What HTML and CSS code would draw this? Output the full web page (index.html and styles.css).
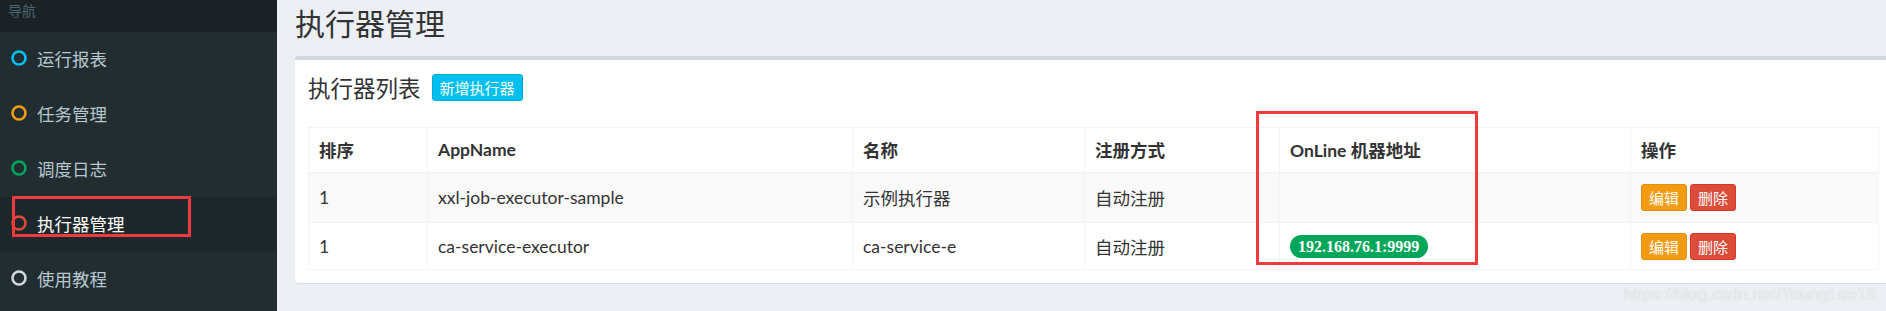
FILE: index.html
```html
<!DOCTYPE html>
<html lang="zh-CN">
<head>
    <meta charset="UTF-8">
    <title>执行器管理</title>
    <link rel="stylesheet" href="styles.css">
</head>
<body>
    <div class="wrapper">
        <aside class="sidebar">
            <div class="sidebar-header">导航</div>
            <ul class="sidebar-menu">
                <li>
                    <svg class="dot" width="16" height="16" viewBox="0 0 16 16"><circle cx="8" cy="8" r="6.5" stroke="#00c0ef"/></svg>
                    <span>运行报表</span>
                </li>
                <li>
                    <svg class="dot" width="16" height="16" viewBox="0 0 16 16"><circle cx="8" cy="8" r="6.5" stroke="#f39c12"/></svg>
                    <span>任务管理</span>
                </li>
                <li>
                    <svg class="dot" width="16" height="16" viewBox="0 0 16 16"><circle cx="8" cy="8" r="6.5" stroke="#00a65a"/></svg>
                    <span>调度日志</span>
                </li>
                <li class="active">
                    <svg class="dot" width="16" height="16" viewBox="0 0 16 16"><circle cx="8" cy="8" r="6.5" stroke="#dd4b39"/></svg>
                    <span>执行器管理</span>
                </li>
                <li>
                    <svg class="dot" width="16" height="16" viewBox="0 0 16 16"><circle cx="8" cy="8" r="6.5" stroke="#d2d6de"/></svg>
                    <span>使用教程</span>
                </li>
            </ul>
        </aside>
        <main class="content">
            <h1 class="page-title">执行器管理</h1>
            <section class="box">
                <div class="box-header">
                    <h3 class="box-title">执行器列表</h3>
                    <button class="btn btn-info">新增执行器</button>
                </div>
                <div class="box-body">
                    <table class="table">
                        <colgroup>
                            <col style="width: 119px">
                            <col style="width: 425px">
                            <col style="width: 232px">
                            <col style="width: 195px">
                            <col style="width: 351px">
                            <col style="width: 248px">
                        </colgroup>
                        <thead>
                            <tr>
                                <th>排序</th>
                                <th>AppName</th>
                                <th>名称</th>
                                <th>注册方式</th>
                                <th>OnLine 机器地址</th>
                                <th>操作</th>
                            </tr>
                        </thead>
                        <tbody>
                            <tr class="row-odd">
                                <td>1</td>
                                <td>xxl-job-executor-sample</td>
                                <td>示例执行器</td>
                                <td>自动注册</td>
                                <td></td>
                                <td>
                                    <div class="actions">
                                        <button class="btn btn-xs btn-warning">编辑</button>
                                        <button class="btn btn-xs btn-danger">删除</button>
                                    </div>
                                </td>
                            </tr>
                            <tr class="row-even">
                                <td>1</td>
                                <td>ca-service-executor</td>
                                <td>ca-service-e</td>
                                <td>自动注册</td>
                                <td><span class="label label-success">192.168.76.1:9999</span></td>
                                <td>
                                    <div class="actions">
                                        <button class="btn btn-xs btn-warning">编辑</button>
                                        <button class="btn btn-xs btn-danger">删除</button>
                                    </div>
                                </td>
                            </tr>
                        </tbody>
                    </table>
                </div>
            </section>
        </main>

        <!-- annotation frames drawn over the screenshot -->
        <div class="mark mark-menu"></div>
        <div class="mark mark-online"></div>
        <div class="watermark">https://blog.csdn.net/YoungLee16</div>
    </div>
</body>
</html>
```

FILE: styles.css
```css
* {
    box-sizing: border-box;
}
html, body {
    margin: 0;
    padding: 0;
}
body {
    font-family: "Noto Sans CJK SC", "Noto Sans", sans-serif;
    background: #ecf0f5;
    color: #333;
    overflow: hidden;
}
.wrapper {
    position: relative;
    display: flex;
    width: 1886px;
    height: 311px;
    overflow: hidden;
}

/* sidebar */
.sidebar {
    flex: none;
    width: 277px;
    background: #222d32;
}
.sidebar-header {
    height: 32px;
    padding: 0 8px;
    background: #1a2226;
    color: #4b646f;
    font-size: 14px;
    line-height: normal;
}
.sidebar-menu {
    list-style: none;
    margin: 0;
    padding: 0;
}
.sidebar-menu li {
    display: flex;
    align-items: center;
    gap: 10px;
    height: 55px;
    padding: 0 0 3px 11px;
    color: #b8c7ce;
    font-size: 17.5px;
}
.sidebar-menu li.active {
    background: #1e282c;
    color: #fff;
}
.dot {
    flex: none;
    fill: none;
    stroke-width: 2.6;
}

/* content */
.content {
    flex: 1;
    min-width: 0;
    padding-left: 18px;
}
.page-title {
    margin: 0;
    font-size: 30px;
    font-weight: normal;
    line-height: normal;
    color: #333;
}
.box {
    margin-top: 12px;
    margin-right: -5px;
    background: #fff;
    border-top: 4px solid #d2d6de;
    border-radius: 4px;
    box-shadow: 0 1px 1px rgba(0, 0, 0, 0.1);
}
.box-header {
    display: flex;
    align-items: center;
    gap: 11px;
    padding: 14px 13px 13px;
}
.box-title {
    margin: 0;
    font-size: 22.5px;
    font-weight: normal;
    line-height: 27px;
}
.box-body {
    padding: 13px 13px 13px;
}
.btn {
    font-family: inherit;
    color: #fff;
    border: 1px solid transparent;
    border-radius: 3px;
    cursor: pointer;
}
.btn-info {
    height: 27px;
    padding: 0 7px;
    font-size: 15px;
    line-height: 25px;
    background: #00c0ef;
    border-color: #00acd6;
}

/* table */
.table {
    width: 1570px;
    border-collapse: collapse;
    table-layout: fixed;
    font-family: Lato, "Noto Sans CJK SC", sans-serif;
    font-size: 17.5px;
}
.table th, .table td {
    padding: 0 10px;
    border: 1px solid #f4f4f4;
    text-align: left;
    vertical-align: middle;
    white-space: nowrap;
}
.table th {
    height: 45px;
    font-weight: bold;
    border-bottom-width: 2px;
}
.row-odd td {
    height: 50px;
    background: #f9f9f9;
}
.row-even td {
    height: 47px;
}
.actions {
    display: flex;
    gap: 3px;
}
.btn-xs {
    height: 27px;
    padding: 0 7px;
    font-family: "Noto Sans CJK SC", sans-serif;
    font-size: 15px;
    line-height: 25px;
}
.btn-warning {
    background: #f39c12;
    border-color: #e08e0b;
}
.btn-danger {
    background: #dd4b39;
    border-color: #d73925;
}
.label {
    display: inline-block;
    height: 23px;
    padding: 0 9px 0 8px;
    border-radius: 12px;
    font-family: "Liberation Serif", serif;
    font-size: 16px;
    font-weight: bold;
    line-height: 23px;
    color: #fff;
}
.label-success {
    background: #00a65a;
}

/* overlays */
.mark {
    position: absolute;
    border: 3px solid #ef3b3b;
    pointer-events: none;
}
.mark-menu {
    left: 12px;
    top: 196px;
    width: 179px;
    height: 41px;
}
.mark-online {
    left: 1256px;
    top: 111px;
    width: 222px;
    height: 154px;
}
.watermark {
    position: absolute;
    right: 10px;
    bottom: 6px;
    font-family: "Liberation Sans", Arial, sans-serif;
    font-size: 17px;
    color: rgba(255, 255, 255, 0.8);
    text-shadow: 0 0 1px rgba(0, 0, 0, 0.25);
}
```
